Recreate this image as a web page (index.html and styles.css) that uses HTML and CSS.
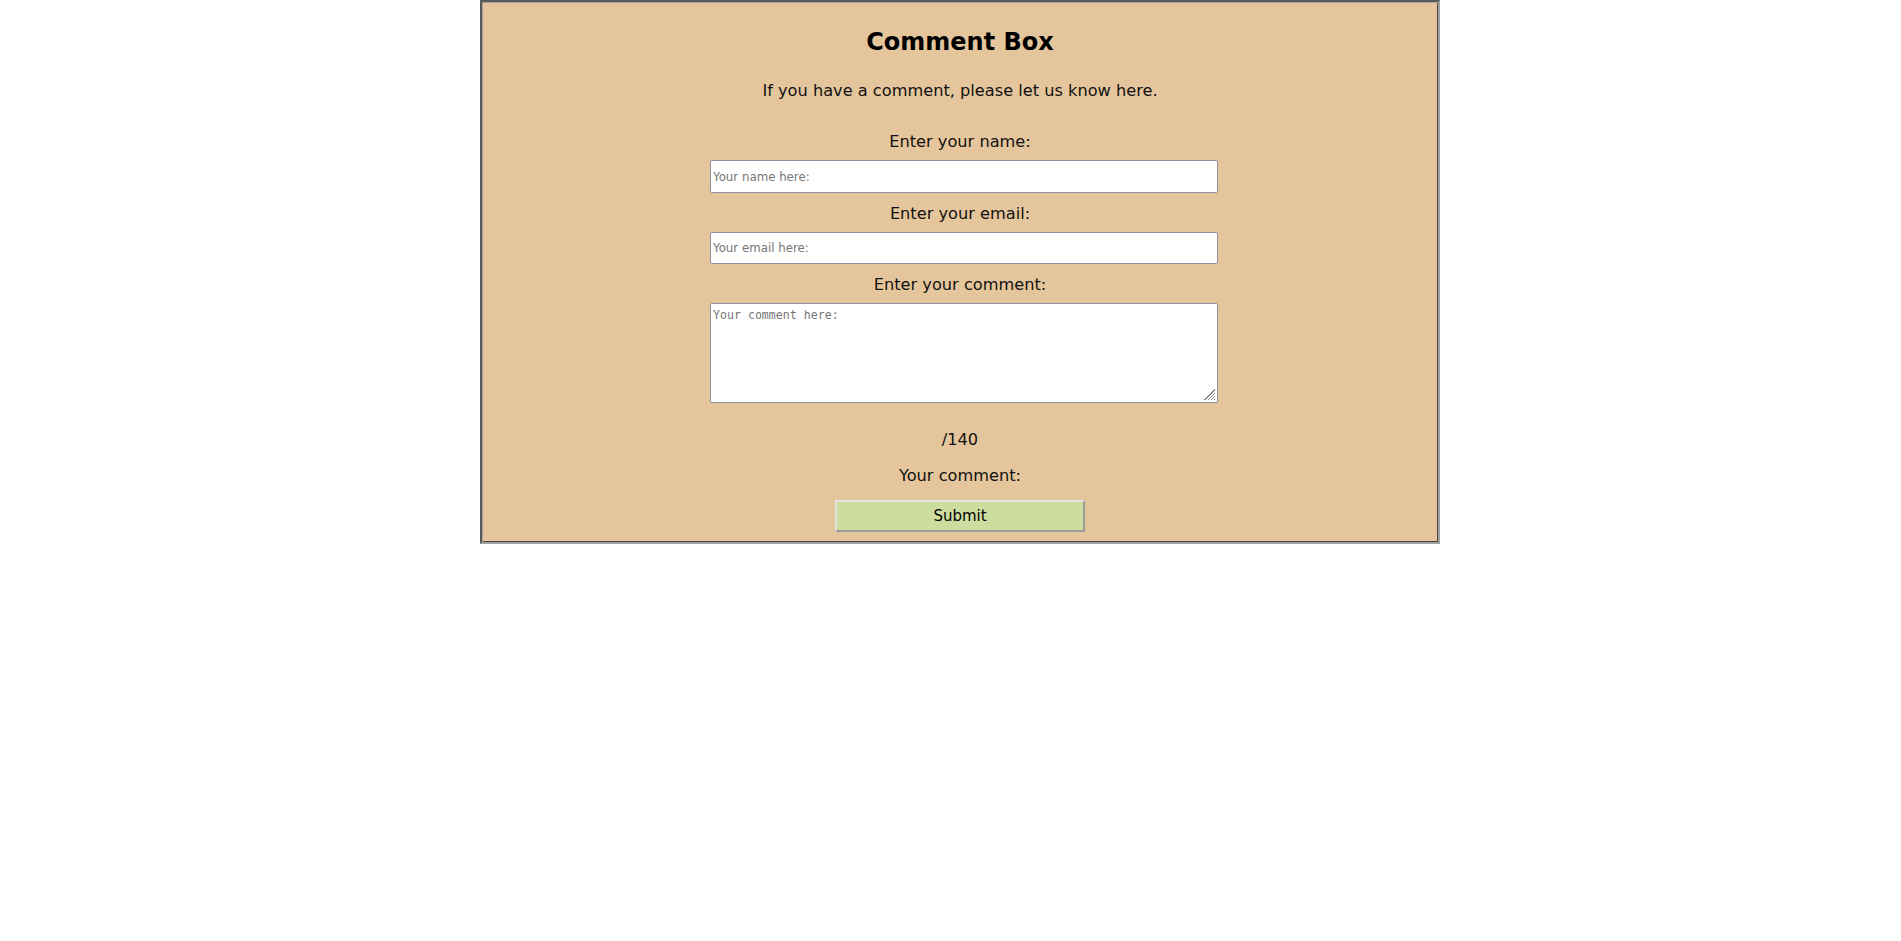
FILE: index.html
```html
<!DOCTYPE html>
<html lang="en">
<head>
<meta charset="utf-8">
<title>Comment Box</title>
<link rel="stylesheet" href="styles.css">
</head>
<body>
<form class="card">
  <h2 class="card-title">Comment Box</h2>
  <p class="card-intro">If you have a comment, please let us know here.</p>
  <label class="field-label lbl-name" for="name">Enter your name:</label>
  <input class="field-input in-name" id="name" type="text" placeholder="Your name here:">
  <label class="field-label lbl-next" for="email">Enter your email:</label>
  <input class="field-input in-email" id="email" type="email" placeholder="Your email here:">
  <label class="field-label lbl-next" for="comment">Enter your comment:</label>
  <textarea class="field-area" id="comment" placeholder="Your comment here:"></textarea>
  <p class="counter">/140</p>
  <p class="preview">Your comment:</p>
  <button class="submit-btn" type="button">Submit</button>
</form>
</body>
</html>
```
FILE: styles.css
```css
html, body {
  margin: 0;
  padding: 0;
  background: #ffffff;
}

body {
  font-family: "DejaVu Sans", Verdana, sans-serif;
  color: #111;
}

.card {
  box-sizing: content-box;
  width: 956px;
  margin: 0 0 0 480px;
  padding: 0 0 10px 0;
  background: #e5c69c;
  border: 2px solid;
  border-color: #5a5a5a #a0a0a0 #a0a0a0 #5a5a5a;
  box-shadow: inset 1px 1px 0 #a3a3a3, inset -1px -1px 0 #454545;
  display: flex;
  flex-direction: column;
  align-items: center;
}

.card-title {
  margin: 26px 0 0 0;
  font-size: 24px;
  line-height: 28px;
  font-weight: bold;
  color: #000;
}

.card-intro {
  margin: 25px 0 0 0;
  font-size: 16.2px;
  line-height: 19px;
}

.field-label {
  display: block;
  font-size: 16.2px;
  line-height: 19px;
}

.lbl-name {
  margin-top: 32px;
}

.lbl-next {
  margin-top: 11px;
}

.field-input {
  box-sizing: border-box;
  width: 508px;
  height: 33px;
  margin: 9px 0 0 8px;
  padding: 0 2px;
  border: 1px solid #9191a3;
  border-radius: 2px;
  background: #fff;
  font-family: "DejaVu Sans", Verdana, sans-serif;
  font-size: 11.8px;
  color: #111;
}

.in-email {
  height: 32px;
}

.field-input::placeholder {
  color: #767676;
}

.field-area {
  box-sizing: border-box;
  width: 508px;
  height: 100px;
  margin: 9px 0 0 8px;
  padding: 4px 2px 2px 2px;
  border: 1px solid #9191a3;
  border-radius: 2px;
  background-color: #fff;
  background-image: linear-gradient(135deg, transparent 0 9px, #8a8a8a 9px 10px, transparent 10px 11.4px, #8a8a8a 11.4px 12.4px, transparent 12.4px 13.8px, #8a8a8a 13.8px 14.8px, transparent 14.8px 16.2px, #8a8a8a 16.2px 17px);
  background-size: 12px 12px;
  background-position: right 2px bottom 2px;
  background-repeat: no-repeat;
  font-family: "DejaVu Sans Mono", "Liberation Mono", monospace;
  font-size: 11.6px;
  line-height: 14px;
  color: #111;
}

.field-area::-webkit-resizer {
  background: transparent;
}

.field-area::placeholder {
  color: #767676;
}

.counter {
  margin: 27px 0 0 0;
  font-size: 16.2px;
  line-height: 19px;
}

.preview {
  margin: 17px 0 0 0;
  font-size: 16.2px;
  line-height: 19px;
}

.submit-btn {
  box-sizing: border-box;
  width: 250px;
  height: 32px;
  margin: 15px 0 0 0;
  padding: 0;
  background: #cddd9f;
  border: 2px solid;
  border-color: #e2e2e2 #9c9c9c #9c9c9c #e2e2e2;
  font-family: "DejaVu Sans", Tahoma, sans-serif;
  font-size: 15px;
  color: #000;
}
```
